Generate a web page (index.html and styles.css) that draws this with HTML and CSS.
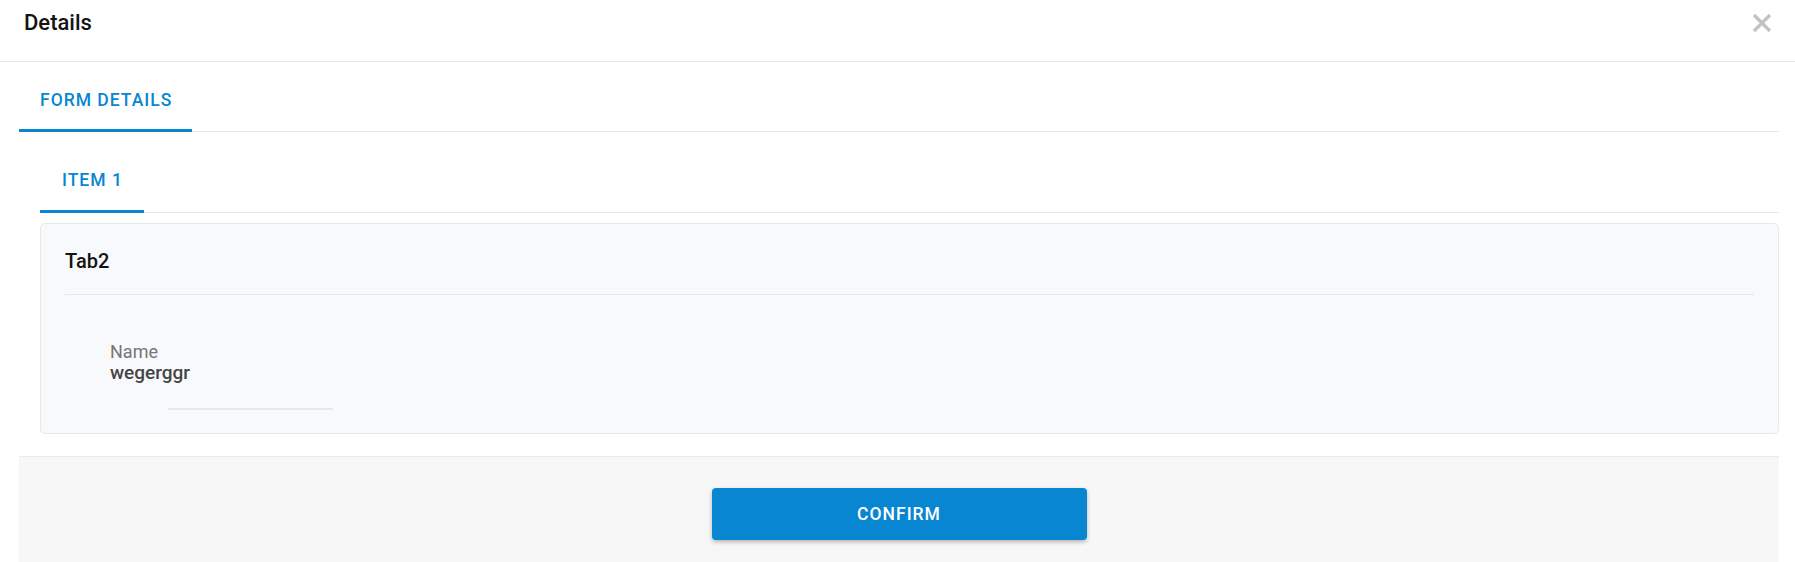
FILE: index.html
```html
<!DOCTYPE html>
<html lang="en">
<head>
<meta charset="utf-8">
<title>Details</title>
<link rel="stylesheet" href="styles.css">
</head>
<body>
<div class="dialog">
  <header class="header">
    <h1 class="title">Details</h1>
    <button class="close" aria-label="Close">
      <svg width="20" height="20" viewBox="0 0 20 20"><path d="M2 2 L18 18 M18 2 L2 18" stroke="#c2c2c2" stroke-width="3.2" fill="none"/></svg>
    </button>
  </header>
  <main class="content">
    <nav class="tabs">
      <div class="tab tab-outer">FORM DETAILS</div>
    </nav>
    <section class="inner">
      <nav class="tabs tabs-inner">
        <div class="tab">ITEM 1</div>
      </nav>
      <div class="card">
        <h2 class="card-title">Tab2</h2>
        <div class="separator"></div>
        <div class="field">
          <div class="field-label">Name</div>
          <div class="field-value">wegerggr</div>
          <div class="field-line"></div>
        </div>
      </div>
    </section>
    <footer class="footer">
      <button class="confirm">CONFIRM</button>
    </footer>
  </main>
</div>
</body>
</html>
```
FILE: styles.css
```css
html, body {
  margin: 0;
  padding: 0;
  background: #ffffff;
}
body {
  font-family: Roboto, "Liberation Sans", Arial, sans-serif;
  width: 1795px;
  height: 562px;
  overflow: hidden;
}
.header {
  height: 62px;
  box-sizing: border-box;
  border-bottom: 1px solid #e8e8e8;
  display: flex;
  justify-content: space-between;
  align-items: flex-start;
  padding: 10px 23px 0 24px;
}
.title {
  margin: 0;
  font-size: 22px;
  line-height: 26px;
  font-weight: 500;
  color: #141414;
}
.close {
  border: none;
  background: none;
  padding: 0;
  margin-top: 3px;
  width: 20px;
  height: 20px;
  cursor: pointer;
}
.close svg {
  display: block;
}
.content {
  padding: 0 16px 0 19px;
}
.tabs {
  display: flex;
  border-bottom: 1px solid #e8e8e8;
}
.tab {
  height: 70px;
  box-sizing: border-box;
  padding: 27px 21px 0 22px;
  border-bottom: 3px solid #0886d1;
  margin-bottom: -1px;
  font-size: 17.5px;
  line-height: 20px;
  font-weight: 500;
  letter-spacing: 1px;
  color: #0886d1;
}
.tab-outer {
  padding-top: 28px;
  padding-left: 21px;
  padding-right: 20px;
}
.inner {
  margin-left: 21px;
}
.tabs-inner {
  margin-top: 11px;
}
.card {
  margin-top: 10px;
  border: 1px solid #e6e8eb;
  border-radius: 5px;
  background: #f8f9fa;
  padding: 25px 24px 23px 24px;
}
.card-title {
  margin: 0 0 21px 0;
  font-size: 20px;
  line-height: 24px;
  font-weight: 500;
  color: #141414;
}
.separator {
  height: 1px;
  background: #e4e6e9;
}
.field {
  margin-top: 48px;
  padding-left: 45px;
}
.field-label {
  font-size: 18px;
  line-height: 18px;
  color: #767676;
}
.field-value {
  margin-top: 2px;
  font-size: 19px;
  line-height: 20px;
  font-weight: 500;
  color: #454545;
}
.field-line {
  margin-top: 25px;
  margin-left: 58px;
  width: 165px;
  height: 2px;
  background: #e6e7ea;
}
.footer {
  margin-top: 22px;
  border-top: 1px solid #ebebeb;
  background: #f7f7f7;
  padding: 31px 0 22px 0;
  display: flex;
  justify-content: center;
}
.confirm {
  width: 375px;
  height: 52px;
  border: none;
  border-radius: 4px;
  background: #0886d1;
  color: #ffffff;
  font-family: Roboto, "Liberation Sans", Arial, sans-serif;
  font-size: 17.5px;
  font-weight: 500;
  letter-spacing: 1px;
  box-shadow: 0 2px 4px rgba(0, 0, 0, 0.28);
  cursor: pointer;
}
```
